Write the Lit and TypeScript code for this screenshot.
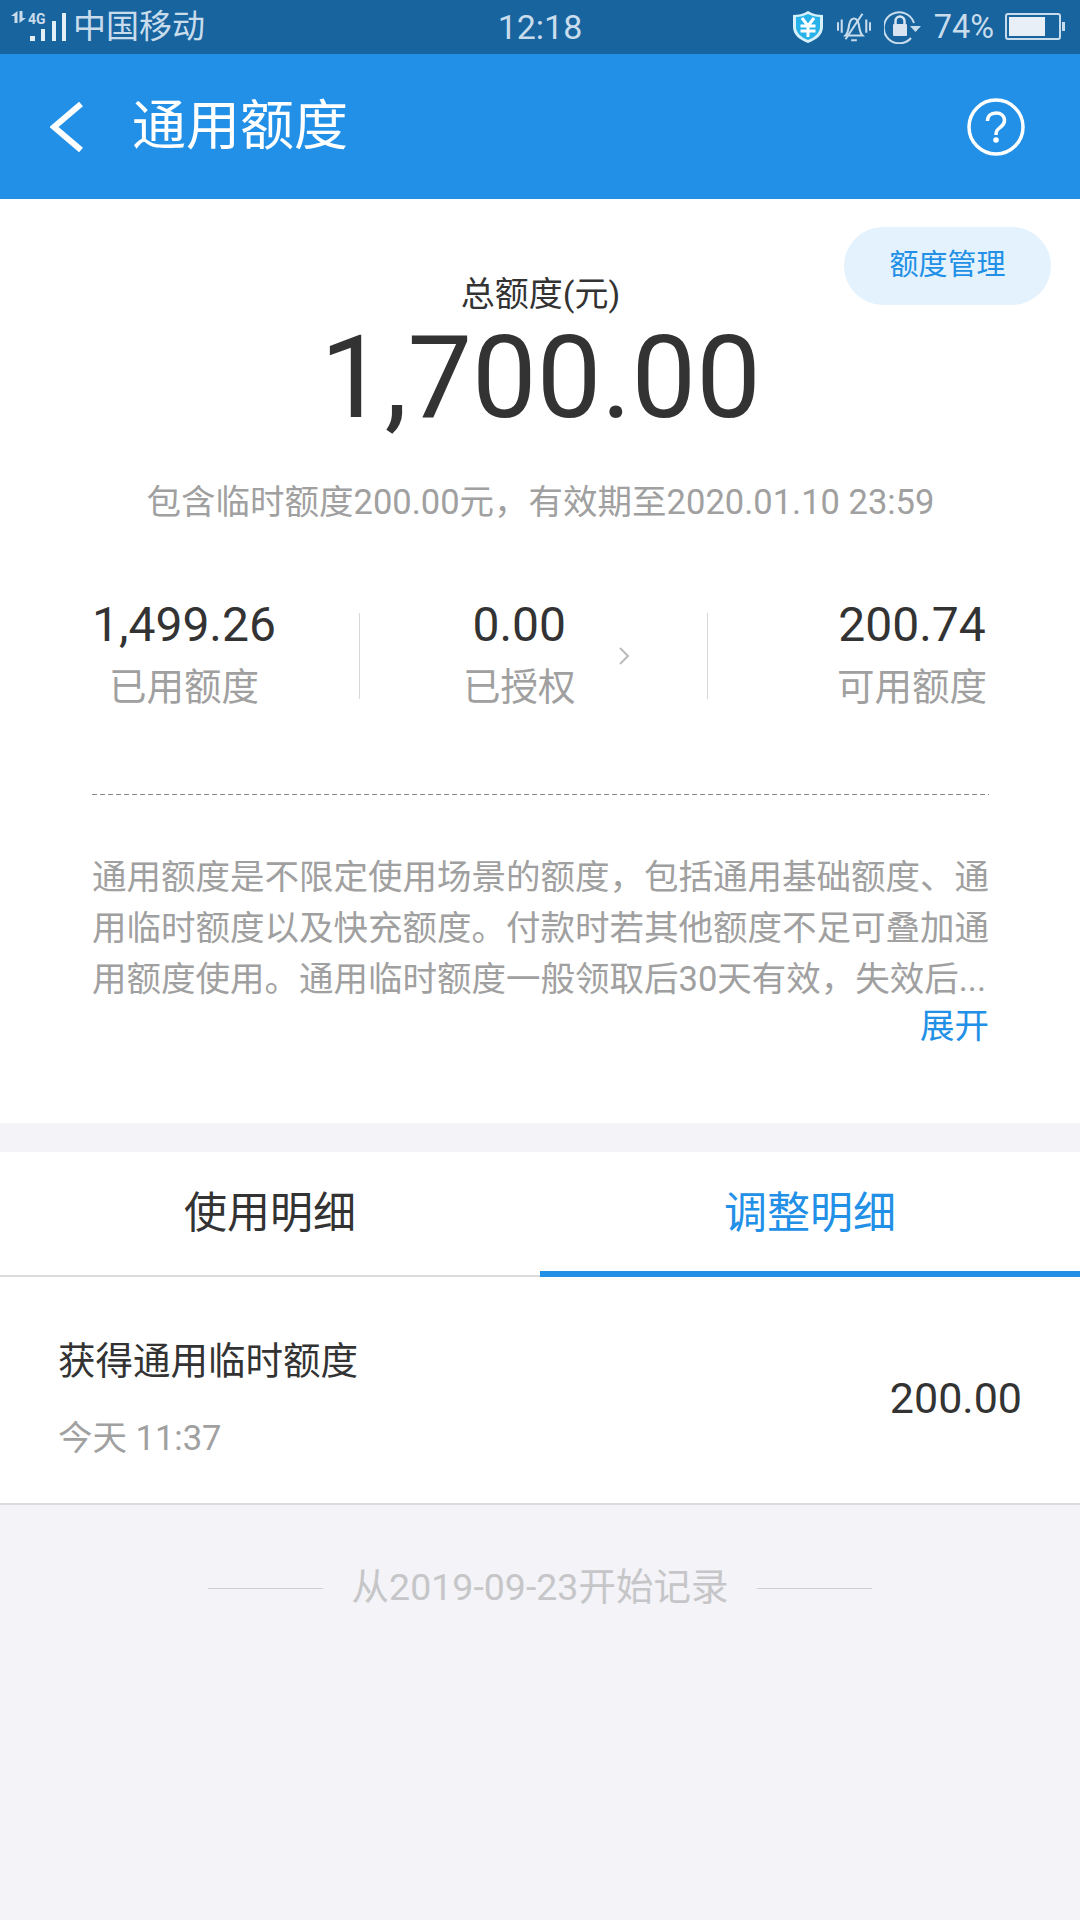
import { LitElement, html, css } from "lit";
import { customElement } from "lit/decorators.js";

@customElement("app-root")
export class AppRoot extends LitElement {
  static styles = css`
    :host {
      display: block;
      width: 1080px;
      height: 1920px;
      background: #f3f3f8;
      font-family: Roboto, "Noto Sans CJK SC", sans-serif;
      color: #333;
      overflow: hidden;
    }
    .status {
      height: 54px;
      background: #17649f;
      color: #c9dcec;
      display: grid;
      grid-template-columns: 1fr auto 1fr;
      align-items: center;
      font-size: 33px;
    }
    .status svg { display: block; }
    .status-left {
      display: flex;
      align-items: center;
      gap: 7px;
    }
    .status-right {
      display: flex;
      align-items: center;
      justify-content: flex-end;
      padding-right: 15px;
    }
    .shield { margin-right: 13px; }
    .bell { margin-right: 13px; }
    .lock { margin-right: 13px; }
    .pct { margin-right: 11px; font-size: 32.5px; }
    .carrier { font-size: 33px; line-height: 54px; }
    .clock { font-size: 34px; }
    .header {
      height: 145px;
      background: #2190e6;
      color: #fff;
      display: flex;
      align-items: center;
      padding: 0 55px 0 50px;
    }
    .header .title {
      font-size: 54px;
      margin-left: 48px;
      flex: 1;
      line-height: 1;
    }
    .summary {
      background: #fff;
      height: 924px;
      box-sizing: border-box;
      position: relative;
      padding: 0 91px 0 92px;
    }
    .manage {
      position: absolute;
      top: 28px;
      right: 29px;
      width: 207px;
      height: 78px;
      box-sizing: border-box;
      padding-bottom: 9px;
      border-radius: 39px;
      background: #e4f2fd;
      color: #2190e6;
      font-size: 29px;
      display: flex;
      align-items: center;
      justify-content: center;
    }
    .total-label {
      padding-top: 75px;
      text-align: center;
      font-size: 34px;
      line-height: 40px;
    }
    .total {
      text-align: center;
      font-size: 115px;
      line-height: 116px;
      margin-top: 6px;
    }
    .temp {
      text-align: center;
      font-size: 34.5px;
      line-height: 44px;
      color: #a0a0a0;
      margin-top: 44px;
    }
    .stats {
      display: grid;
      grid-template-columns: 267px 349px 1fr;
      margin-top: 73px;
      height: 104px;
    }
    .stat { display: flex; align-items: flex-start; }
    .mid {
      border-left: 1px solid #d8d8d8;
      border-right: 1px solid #d8d8d8;
      height: 86px;
      margin-top: 16px;
      padding-left: 103px;
    }
    .right { justify-content: flex-end; padding-right: 2px; }
    .cell { text-align: center; }
    .mid .cell { margin-top: -16px; }
    .value { font-size: 48px; line-height: 56px; color: #333; }
    .label { font-size: 37.5px; line-height: 50px; margin-top: 9px; color: #a0a0a0; white-space: nowrap; }
    .chev { margin-left: 42px; margin-top: 33px; }
    .dash {
      height: 1px;
      background: repeating-linear-gradient(90deg, #888 0 5px, transparent 5px 8px);
      margin-top: 93px;
    }
    .desc {
      margin-top: 57px;
      font-size: 34.5px;
      line-height: 51px;
      color: #a0a0a0;
      white-space: nowrap;
    }
    .more {
      text-align: right;
      font-size: 34.5px;
      line-height: 42px;
      color: #2190e6;
    }
    .tabs {
      margin-top: 29px;
      height: 125px;
      background: #fff;
      display: flex;
      box-sizing: border-box;
      border-bottom: 2px solid #dcdcdc;
    }
    .tab {
      flex: 1;
      display: flex;
      align-items: center;
      justify-content: center;
      font-size: 43px;
      color: #333;
      box-sizing: border-box;
      height: 125px;
      padding-bottom: 12px;
    }
    .tab.on {
      color: #2190e6;
      border-bottom: 6px solid #2190e6;
      padding-bottom: 6px;
    }
    .row {
      height: 228px;
      background: #fff;
      box-sizing: border-box;
      border-bottom: 2px solid #dcdcdc;
      display: flex;
      align-items: center;
      justify-content: space-between;
      padding: 15px 58px 0;
    }
    .row-title { font-size: 37.5px; line-height: 50px; }
    .row-time { font-size: 34.5px; line-height: 44px; color: #a0a0a0; margin-top: 30px; }
    .amount { font-size: 43px; }
    .foot {
      margin-top: 57px;
      display: flex;
      align-items: center;
      justify-content: center;
      gap: 29px;
      font-size: 37.5px;
      line-height: 50px;
      color: #c6c6c8;
    }
    .foot i { width: 115px; height: 1px; margin-top: 3px; background: #d0d0d2; }
  `;

  render() {
    return html`
      <div class="status">
        <div class="status-left">
          <svg width="66" height="54" viewBox="0 0 66 54">
            <path d="M17.500 11v12h-3v-7H11zM19.500 23V11h3v7H26z" fill="#c9dcec"/>
            <text x="28" y="24" font-size="14" font-weight="700" fill="#c9dcec" font-family="Roboto">4G</text>
            <rect x="30" y="36" width="5" height="5" fill="#e4eef6"/>
            <rect x="41" y="29" width="4" height="12" fill="#e4eef6"/>
            <rect x="52" y="21" width="4" height="20" fill="#e4eef6"/>
            <rect x="62" y="13" width="4" height="28" fill="#e4eef6"/>
          </svg>
          <span class="carrier">中国移动</span>
        </div>
        <div class="clock">12:18</div>
        <div class="status-right">
          <svg class="shield" width="32" height="34" viewBox="0 0 32 34">
            <path d="M16 1c5 3 10 4 15 4v12c0 8-7 13-15 16C8 30 1 25 1 17V5c5 0 10-1 15-4z" fill="#d7f1fb"/>
            <path d="M16 4c4 2 8 3 12 3v10c0 6-6 11-12 13C10 28 4 23 4 17V7c4 0 8-1 12-3z" fill="#27b3ea"/>
            <path d="M10 8l6 8 6-8M8.500 16h15M8.500 21h15M16 16v11" stroke="#fff" stroke-width="3" fill="none"/>
          </svg>
          <svg class="bell" width="34" height="30" viewBox="0 0 36 30" fill="none" stroke="#c9dcec" stroke-width="2.200">
            <path d="M9 24c3-3 3-7 4-12 1-4 3-6 5-6s4 2 5 6c1 5 1 9 4 12z"/>
            <path d="M9 28L27 1M15 29h6M1 10v9M5 7v14M31 7v14M35 10v9"/>
          </svg>
          <svg class="lock" width="37" height="34" viewBox="0 0 37 34" fill="none" stroke="#c9dcec" stroke-width="2">
            <path d="M27 28A15.500 15.500 0 1 1 30 13"/>
            <path d="M26 16h11l-5.500 6z" fill="#c9dcec" stroke="none"/>
            <rect x="9" y="14" width="14" height="12" rx="1" fill="#d8e5f1" stroke="none"/>
            <path d="M11.500 15v-4a4.500 4.500 0 0 1 9 0v4" stroke="#d8e5f1" stroke-width="2.500"/>
          </svg>
          <span class="pct">74%</span>
          <svg width="60" height="28" viewBox="0 0 60 28">
            <rect x="1" y="1" width="54" height="25" rx="2" fill="none" stroke="#c9dcec" stroke-width="2"/>
            <rect x="4" y="4" width="36" height="19" fill="#e8eff7"/>
            <rect x="57" y="9" width="3" height="9" fill="#c9dcec"/>
          </svg>
        </div>
      </div>
      <div class="header">
        <svg width="34" height="50" viewBox="0 0 34 50" fill="none" stroke="#fff" stroke-width="6">
          <path d="M31 2L4 25l27 23"/>
        </svg>
        <div class="title">通用额度</div>
        <svg width="58" height="58" viewBox="0 0 58 58" fill="none" stroke="#fff">
          <circle cx="29" cy="29" r="27" stroke-width="3.500"/>
          <path d="M20.500 23c0-5 3.500-8 8.500-8s8.500 3 8.500 7.500c0 4-2.500 5.500-5 7.500s-3.500 3-3.500 7" stroke-width="3.500"/>
          <circle cx="29" cy="42" r="2.800" fill="#fff" stroke="none"/>
        </svg>
      </div>
      <div class="summary">
        <div class="manage">额度管理</div>
        <div class="total-label">总额度(元)</div>
        <div class="total">1,700.00</div>
        <div class="temp">包含临时额度200.00元，有效期至2020.01.10 23:59</div>
        <div class="stats">
          <div class="stat first">
            <div class="cell">
              <div class="value">1,499.26</div>
              <div class="label">已用额度</div>
            </div>
          </div>
          <div class="stat mid">
            <div class="cell">
              <div class="value">0.00</div>
              <div class="label">已授权</div>
            </div>
            <svg class="chev" width="12" height="20" viewBox="0 0 12 20" fill="none" stroke="#bbb" stroke-width="2">
              <path d="M2 2l8 8-8 8"/>
            </svg>
          </div>
          <div class="stat right">
            <div class="cell">
              <div class="value">200.74</div>
              <div class="label">可用额度</div>
            </div>
          </div>
        </div>
        <div class="dash"></div>
        <div class="desc">
          <div>通用额度是不限定使用场景的额度，包括通用基础额度、通</div>
          <div>用临时额度以及快充额度。付款时若其他额度不足可叠加通</div>
          <div>用额度使用。通用临时额度一般领取后30天有效，失效后...</div>
        </div>
        <div class="more">展开</div>
      </div>
      <div class="tabs">
        <div class="tab">使用明细</div>
        <div class="tab on">调整明细</div>
      </div>
      <div class="row">
        <div>
          <div class="row-title">获得通用临时额度</div>
          <div class="row-time">今天 11:37</div>
        </div>
        <div class="amount">200.00</div>
      </div>
      <div class="foot"><i></i><span>从2019-09-23开始记录</span><i></i></div>
    `;
  }
}
